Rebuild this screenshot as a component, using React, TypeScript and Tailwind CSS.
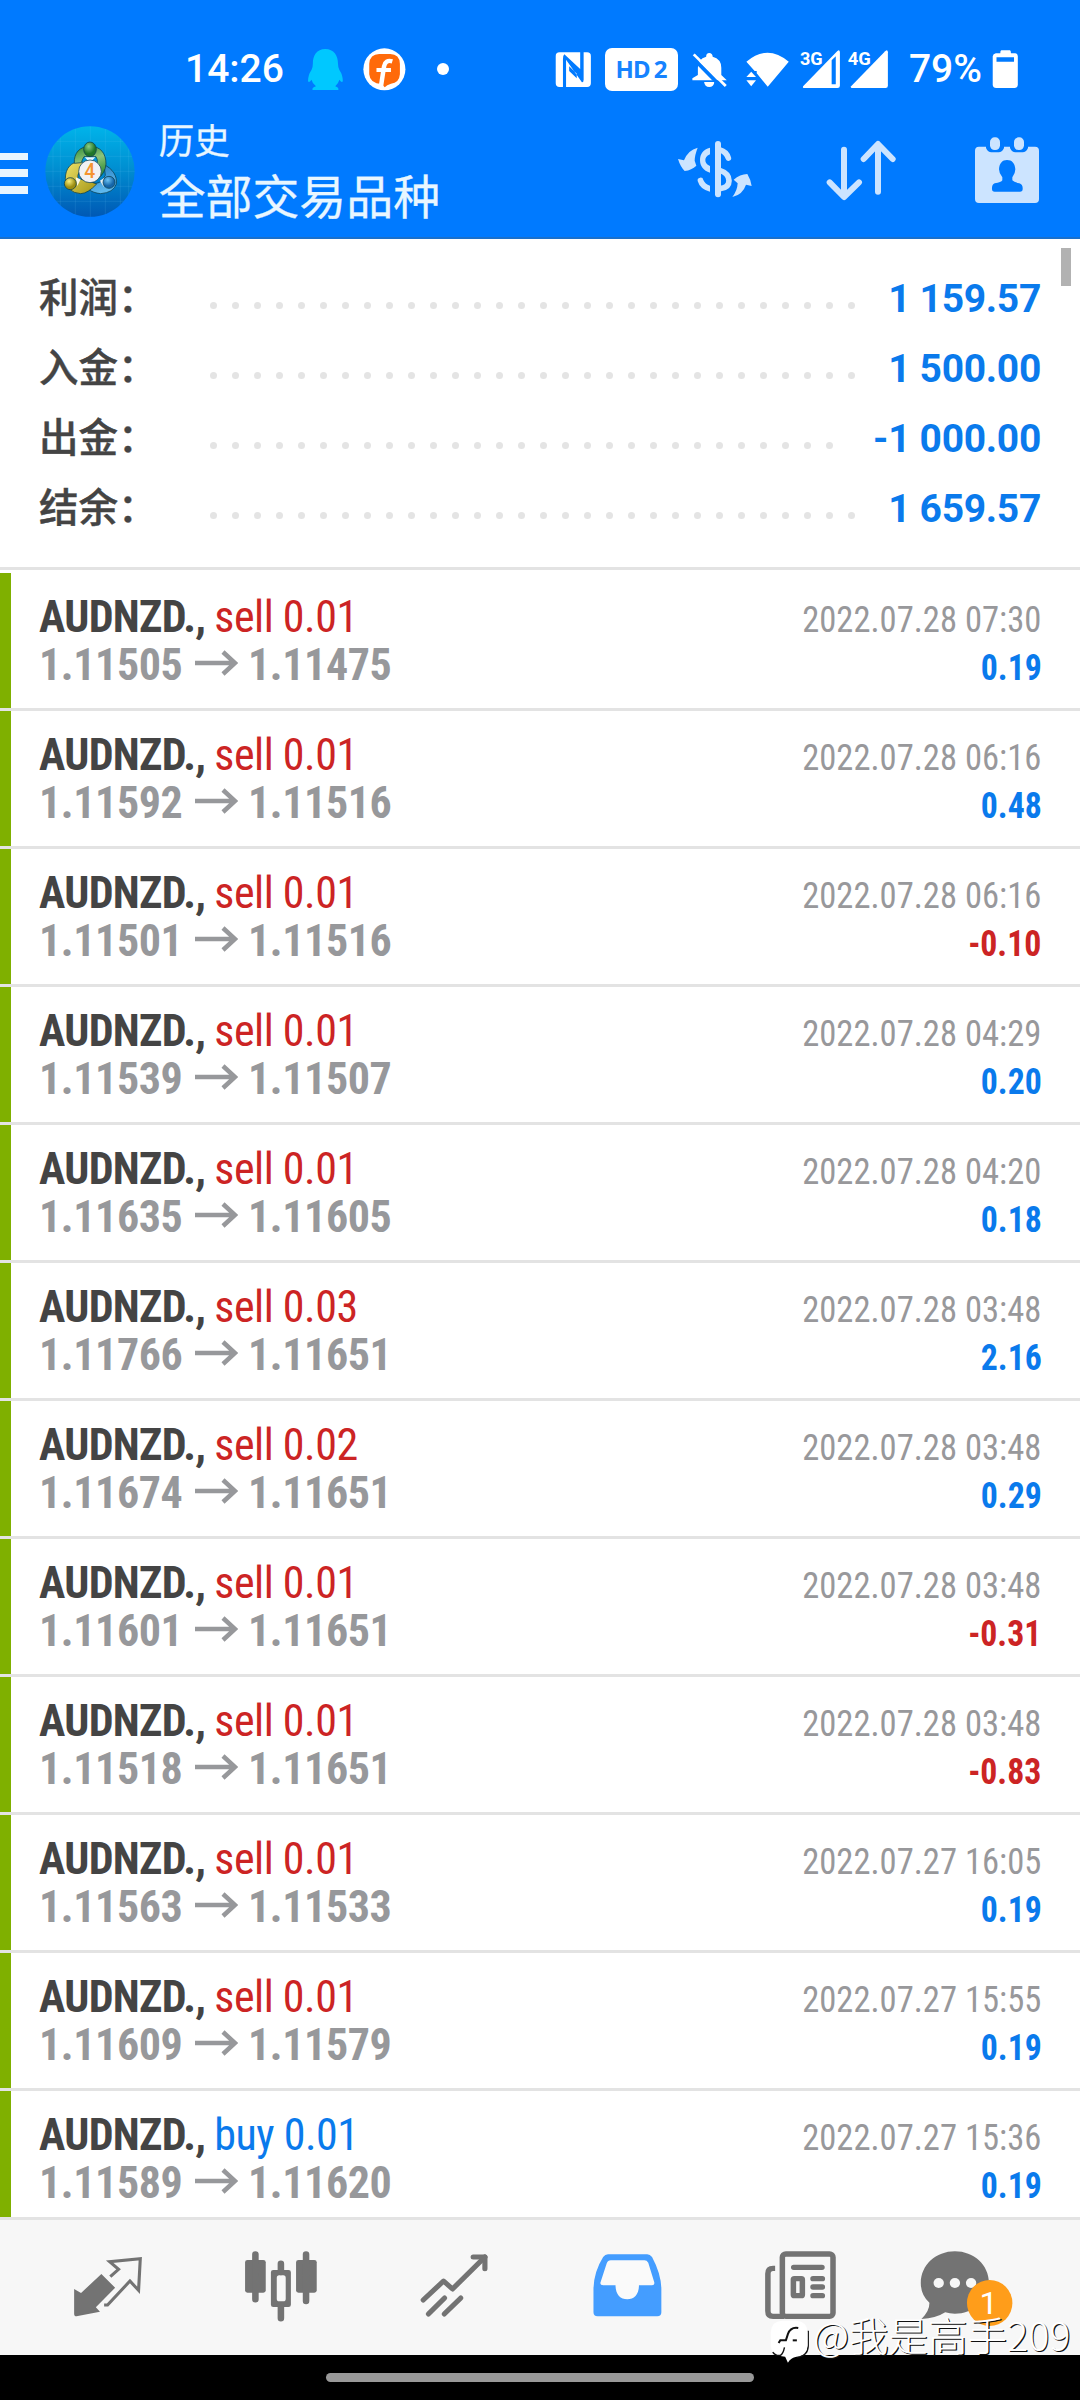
import type { ReactNode } from 'react';

type Deal = { side: 'sell' | 'buy'; lots: string; open: string; close: string; time: string; profit: string };

const deals: Deal[] = [
  { side: 'sell', lots: '0.01', open: '1.11505', close: '1.11475', time: '2022.07.28 07:30', profit: '0.19' },
  { side: 'sell', lots: '0.01', open: '1.11592', close: '1.11516', time: '2022.07.28 06:16', profit: '0.48' },
  { side: 'sell', lots: '0.01', open: '1.11501', close: '1.11516', time: '2022.07.28 06:16', profit: '-0.10' },
  { side: 'sell', lots: '0.01', open: '1.11539', close: '1.11507', time: '2022.07.28 04:29', profit: '0.20' },
  { side: 'sell', lots: '0.01', open: '1.11635', close: '1.11605', time: '2022.07.28 04:20', profit: '0.18' },
  { side: 'sell', lots: '0.03', open: '1.11766', close: '1.11651', time: '2022.07.28 03:48', profit: '2.16' },
  { side: 'sell', lots: '0.02', open: '1.11674', close: '1.11651', time: '2022.07.28 03:48', profit: '0.29' },
  { side: 'sell', lots: '0.01', open: '1.11601', close: '1.11651', time: '2022.07.28 03:48', profit: '-0.31' },
  { side: 'sell', lots: '0.01', open: '1.11518', close: '1.11651', time: '2022.07.28 03:48', profit: '-0.83' },
  { side: 'sell', lots: '0.01', open: '1.11563', close: '1.11533', time: '2022.07.27 16:05', profit: '0.19' },
  { side: 'sell', lots: '0.01', open: '1.11609', close: '1.11579', time: '2022.07.27 15:55', profit: '0.19' },
  { side: 'buy', lots: '0.01', open: '1.11589', close: '1.11620', time: '2022.07.27 15:36', profit: '0.19' },
];

const summary = [
  { label: '利润：', value: '1 159.57', dots: 30 },
  { label: '入金：', value: '1 500.00', dots: 30 },
  { label: '出金：', value: '-1 000.00', dots: 29 },
  { label: '结余：', value: '1 659.57', dots: 30 },
];

function Icon({ box, className, children }: { box: string; className: string; children: ReactNode }) {
  return (
    <svg viewBox={box} preserveAspectRatio="none" className={`block shrink-0 ${className}`} fill="currentColor">
      {children}
    </svg>
  );
}

function StatusBar() {
  return (
    <div className="flex h-[100px] items-start pt-[46.7px] pl-[185px] text-white">
      <span className="w-[99px] shrink-0 font-['Roboto'] text-[39px] leading-[45px] font-medium">14:26</span>
      <Icon box="890 50 110 134" className="ml-[22.5px] h-[44.67px] w-[37.9px] text-[#00c8ff]">
        <path d="M943 56C918 56 907 76 907 100Q907 112 903 119Q893 134 893 152Q895 160 903 148Q906 160 916 168Q904 172 906 179H981Q983 172 972 168Q981 160 984 148Q992 160 994 152Q994 134 984 119Q980 112 980 100C980 76 968 56 943 56Z" />
      </Icon>
      <Icon box="1050 50 130 134" className="ml-[17.2px] h-[44.67px] w-[44.8px]">
        <ellipse cx="1115" cy="117" rx="61" ry="63" />
        <path
          fill="#ff6a0a"
          d="M1100 71H1132Q1159 72 1160 100V132Q1158 158 1134 160Q1122 163 1116 171L1107 161Q1073 160 1071 132V100Q1073 72 1100 71Z"
        />
        <path fill="none" stroke="#fff" strokeWidth="13" d="M1138 93Q1118 87 1114 108L1105 168" />
        <path fill="none" stroke="#fff" strokeWidth="12" d="M1092 119H1134" />
      </Icon>
      <span className="mt-[16.5px] ml-[30.6px] size-3 shrink-0 rounded-full bg-white" />
      <Icon box="40 50 112 134" className="ml-[104.8px] h-[44.67px] w-[38.6px]">
        <path
          fillRule="evenodd"
          d="M56 66H136Q147 66 147 77V159Q147 170 136 170H56Q45 170 45 159V77Q45 66 56 66ZM116 66V116L70 72Q66 76 66 86V170H75V88L121 156Q126 156 126 148V66ZM84 108V122L106 144V130Z"
        />
      </Icon>
      <span className="mt-[1.3px] ml-[12.6px] flex h-[43px] w-[73px] shrink-0 items-center justify-center gap-[4px] rounded-[7px] bg-white font-['Noto_Sans'] text-[24px] leading-none font-bold text-[#1683ff]">
        <span className="tracking-[-0.8px]">HD</span>
        <span>2</span>
      </span>
      <Icon box="440 50 108 134" className="ml-[13.5px] h-[44.67px] w-[37.2px]">
        <path d="M493 68Q502 68 503 79Q528 86 528 112V134L544 150H444V144L460 134V112Q460 86 484 79Q484 68 493 68Z" />
        <path d="M478 155H508Q506 170 493 170Q480 170 478 155Z" />
        <path d="M441 78L534 176" stroke="#007aff" strokeWidth="11" />
        <path d="M448 72L541 167" stroke="#fff" strokeWidth="8" />
      </Icon>
      <Icon box="596 50 130 134" className="ml-[16.5px] h-[44.67px] w-[44.8px]">
        <path d="M600 94Q661 40 723 94L662 169L630 129V122L624 122Z" />
        <path d="M614 124L628 140H600Z" />
        <path d="M600 150H628L614 168Z" />
      </Icon>
      <Icon box="754 50 118 134" className="ml-[9.6px] h-[44.67px] w-[40.6px]">
        <path d="M866 60Q870 60 870 66V166Q870 173 863 173H764Q761 172 763 168L862 63ZM846 90V162H858V78Z" fillRule="evenodd" />
        <text x="754" y="103" fontSize="56" textLength="66" lengthAdjust="spacingAndGlyphs" className="font-['Roboto'] font-bold">
          3G
        </text>
      </Icon>
      <Icon box="896 50 118 134" className="ml-[8.3px] h-[44.67px] w-[40.6px]">
        <path d="M1008 60Q1012 60 1012 66V166Q1012 173 1005 173H906Q903 172 905 168L1004 63Z" />
        <text x="895" y="103" fontSize="56" textLength="67" lengthAdjust="spacingAndGlyphs" className="font-['Roboto'] font-bold">
          4G
        </text>
      </Icon>
      <span className="ml-[19.9px] w-[73px] shrink-0 font-['Roboto'] text-[39px] leading-[45px] font-medium">79%</span>
      <Icon box="1310 50 82 134" className="ml-[9.1px] h-[44.67px] w-[28.2px]">
        <path
          fillRule="evenodd"
          d="M1340 60H1365Q1368 60 1368 69H1380Q1388 70 1388 78V164Q1387 173 1378 173H1325Q1316 173 1315 164V78Q1316 70 1324 69H1337Q1337 60 1340 60ZM1326 81V94H1377V81Z"
        />
      </Icon>
    </div>
  );
}

function Logo() {
  const lines = [159, 181, 226, 271, 316, 361, 386];
  const rows = [94, 139, 184, 229, 274];
  return (
    <svg viewBox="135 48 270 273" className="mt-[26px] ml-[17px] block h-[91px] w-[90px] shrink-0">
      <defs>
        <linearGradient id="disc" x1="0" y1="0" x2="0" y2="1">
          <stop offset="0" stopColor="#00b4ea" />
          <stop offset="0.45" stopColor="#0090d2" />
          <stop offset="1" stopColor="#0058b4" />
        </linearGradient>
        <linearGradient id="green" x1="0" y1="0" x2="0.3" y2="1">
          <stop offset="0" stopColor="#2f8a35" />
          <stop offset="0.5" stopColor="#8cc47a" />
          <stop offset="1" stopColor="#2e8c36" />
        </linearGradient>
        <linearGradient id="gold" x1="0" y1="0" x2="1" y2="1">
          <stop offset="0" stopColor="#efe36a" />
          <stop offset="1" stopColor="#a39414" />
        </linearGradient>
        <linearGradient id="blue" x1="0" y1="0" x2="0.4" y2="1">
          <stop offset="0" stopColor="#1c74b8" />
          <stop offset="1" stopColor="#5db8ee" />
        </linearGradient>
        <radialGradient id="headGreen" cx="0.4" cy="0.3">
          <stop offset="0" stopColor="#8fce84" />
          <stop offset="1" stopColor="#1f7628" />
        </radialGradient>
        <radialGradient id="headGold" cx="0.4" cy="0.3">
          <stop offset="0" stopColor="#fbf07c" />
          <stop offset="1" stopColor="#9c8d12" />
        </radialGradient>
        <radialGradient id="headBlue" cx="0.4" cy="0.3">
          <stop offset="0" stopColor="#6cc4f6" />
          <stop offset="1" stopColor="#1565a8" />
        </radialGradient>
        <clipPath id="round">
          <ellipse cx="270" cy="184.5" rx="134" ry="136" />
        </clipPath>
      </defs>
      <g clipPath="url(#round)">
        <rect x="135" y="48" width="270" height="273" fill="url(#disc)" />
        <g stroke="#7fd6ff" strokeOpacity="0.18" strokeWidth="2">
          {lines.map((x) => (
            <path key={x} d={`M${x} 48V321`} />
          ))}
          {rows.map((y) => (
            <path key={y} d={`M135 ${y}H405`} />
          ))}
        </g>
      </g>
      <g stroke="#0b3f50" strokeWidth="3" strokeOpacity="0.75">
        <path fill="url(#blue)" d="M312 164C338 176 352 198 349 222Q340 248 302 251C272 248 254 234 244 208L268 216Q290 226 306 212L316 196Z" />
        <path fill="url(#gold)" d="M246 154C212 154 196 176 196 206Q200 248 242 251Q264 250 290 222L262 212L234 206Q230 186 250 178Z" />
        <path fill="url(#green)" d="M223 160C221 128 240 109 270 109C302 109 318 130 318 162Q316 190 292 208L284 176Q298 156 288 140H252Q246 150 244 158Z" />
        <path fill="#fff" fillOpacity="0.9" stroke="none" d="M254 142L286 142L274 154H266ZM227 202L242 208L232 228ZM313 203L300 212L311 231Z" />
        <ellipse cx="270" cy="118" rx="19" ry="22" fill="url(#headGreen)" />
        <circle cx="211" cy="221" r="18" fill="url(#headGold)" />
        <circle cx="327" cy="217" r="18" fill="url(#headBlue)" />
        <circle cx="270" cy="184" r="34" fill="#f1f1f4" />
      </g>
      <text x="269" y="204" textAnchor="middle" fontSize="58" fill="#f59430" className="font-['Roboto'] font-medium">
        4
      </text>
    </svg>
  );
}

function Header() {
  return (
    <header className="h-[239px] border-b-2 border-[#1a70cb] bg-[#007aff]">
      <StatusBar />
      <div className="flex items-start text-[#cce4ff]">
        <div className="mt-[52.7px] flex w-7 shrink-0 flex-col gap-[9.3px]">
          <span className="h-[7.5px] bg-[#e8f5ff]" />
          <span className="h-[7.5px] bg-[#e8f5ff]" />
          <span className="h-[7.5px] bg-[#e8f5ff]" />
        </div>
        <Logo />
        <div className="ml-[23.7px] w-[518.3px] shrink-0 pt-[13.5px] font-['Noto_Sans_CJK_SC'] text-[#e8f6ff] [-webkit-text-stroke:0.3px_#e8f6ff]">
          <div className="text-[35.5px] leading-[50px]">历史</div>
          <div className="text-[46.9px] leading-[61px]">全部交易品种</div>
        </div>
        <Icon box="51 48 228 204" className="mt-[36px] h-[68px] w-[76px]">
          <path d="M113 83Q104 106 104 122L109 137Q95 150 74 153Q61 140 54 117L72 121Q84 90 113 83Z" />
          <path d="M217 231Q232 212 233 190L221 179Q240 163 262 162Q272 178 275 198L258 194Q248 224 217 231Z" />
          <path d="M150 83C130 88 120 102 120 120C120 138 130 152 150 158V138C139 133 136 127 136 120C136 114 139 108 150 103Z" />
          <path d="M113 183A8.5 8.5 0 0 1 130 180Q135 192 150 197V215Q120 208 113 183Z" />
          <g fill="none" stroke="currentColor" strokeLinecap="round">
            <path strokeWidth="18" d="M174 72V223" />
            <path strokeWidth="17" d="M180 90Q199 95 205 114" />
            <path strokeWidth="17" d="M179 151Q207 160 207 182Q207 203 180 206" />
          </g>
        </Icon>
        <Icon box="498 48 210 204" className="mt-[36px] ml-[73px] h-[68px] w-[70px]">
          <g fill="none" stroke="currentColor" strokeWidth="18" strokeLinecap="round" strokeLinejoin="round">
            <path d="M552 89V229M509 187L552 231L597 187" />
            <path d="M654 215V73M611 117L654 72L698 117" />
          </g>
        </Icon>
        <Icon box="942 48 198 204" className="mt-[36px] ml-[78px] h-[68px] w-[66px]">
          <rect x="945" y="80" width="192" height="169" rx="12" />
          <g fill="#007aff">
            <path d="M978 70H1032V84Q1026 97 1016 97H994Q984 97 978 84ZM1050 70H1104V84Q1098 97 1088 97H1066Q1056 97 1050 84Z" />
            <path d="M1041 120C1056 120 1065 130 1066 148Q1066 160 1057 172V181Q1062 187 1078 190Q1089 194 1088 207Q1088 215 1080 215H1004Q996 215 996 207Q995 194 1004 190Q1024 187 1027 181V172Q1017 160 1017 148C1018 130 1027 120 1041 120Z" />
          </g>
          <rect x="990" y="52" width="30" height="38" rx="14" />
          <rect x="1062" y="52" width="30" height="38" rx="14" />
        </Icon>
      </div>
    </header>
  );
}

function Summary() {
  return (
    <section className="relative h-[331px] border-b-[3px] border-[#e3e3e3] pt-[21px] pr-[39px] pl-[39px]">
      {summary.map((row) => (
        <div key={row.label} className="flex h-[70px] items-start">
          <span className="w-[171px] shrink-0 font-['Noto_Sans_CJK_SC'] text-[39.5px] leading-[70px] font-medium text-[#444] [-webkit-text-stroke:0.4px_#444]">
            {row.label}
          </span>
          <span className="mt-[42px] flex flex-1 gap-[15px]">
            {Array.from({ length: row.dots }, (_, i) => (
              <i key={i} className="size-[7px] shrink-0 rounded-full bg-[#e4e4e4]" />
            ))}
          </span>
          <span className="font-['Roboto'] text-[39px] leading-[79px] font-bold tracking-[-0.3px] text-[#0a7aec]">
            {row.value}
          </span>
        </div>
      ))}
      <span className="absolute top-[9px] right-[9px] h-[38px] w-[10px] bg-[#b2b2b2]" />
    </section>
  );
}

function DealRow({ deal }: { deal: Deal }) {
  return (
    <li className="flex h-[138px] shrink-0 border-b-[3px] border-[#e3e3e3]">
      <span className="w-[11px] shrink-0 bg-[#7fb000]" />
      <div className="ml-[28px] flex-1 pt-[20px] font-['Roboto_Condensed'] text-[44px] leading-[48px]">
        <div className="flex">
          <span className="font-bold tracking-[-0.7px] text-[#444]">AUDNZD.,</span>
          <span
            className={
              deal.side === 'sell'
                ? 'ml-[9px] tracking-[-0.5px] text-[#cc2424]'
                : 'ml-[9px] tracking-[-0.5px] text-[#0a7aec]'
            }
          >
            {deal.side} {deal.lots}
          </span>
        </div>
        <div className="flex items-start font-bold tracking-[-0.4px] text-[#97989b]">
          <span className="w-[156px]">{deal.open}</span>
          <svg viewBox="0 0 43 26" className="mt-[8.5px] h-[26px] w-[43px]" fill="none" stroke="currentColor" strokeWidth="4.5">
            <path d="M0 13H40M28 2L40 13L28 24" />
          </svg>
          <span className="ml-[10px]">{deal.close}</span>
        </div>
      </div>
      <div className="flex flex-col items-end pt-[22px] pr-[38.5px] font-['Roboto_Condensed'] text-[37.5px] leading-[48px]">
        <span className="origin-right scale-x-[0.922] text-[#98989b]">{deal.time}</span>
        <span
          className={
            deal.profit.startsWith('-')
              ? 'origin-right scale-x-[0.9] font-bold text-[#cc2424]'
              : 'origin-right scale-x-[0.9] font-bold text-[#0a7aec]'
          }
        >
          {deal.profit}
        </span>
      </div>
    </li>
  );
}

function NavBar() {
  return (
    <nav className="grid h-[138px] grid-cols-6 justify-items-center border-t-[3px] border-[#e3e3e3] bg-[#f7f7f7] px-[21.5px] pt-[26.7px] text-[#737373]">
      <Icon box="205 560 220 230" className="h-[76.7px] w-[75.8px]">
        <path d="M217 686L237 698L296 641L336 682L280 741L292 754L224 768Q217 768 217 760Z" />
        <path
          fill="none"
          stroke="currentColor"
          strokeWidth="9"
          d="M322 649L346 627L320 604L409 595L404 690L379 662L314 734H304"
        />
      </Icon>
      <Icon box="706 560 220 230" className="h-[76.7px] w-[75.8px]">
        <rect x="712" y="599" width="60" height="98" rx="7" />
        <rect x="860" y="599" width="60" height="98" rx="7" />
        <path
          fillRule="evenodd"
          d="M794 629H838Q845 629 845 636V733Q845 740 838 740H794Q787 740 787 733V636Q787 629 794 629ZM811 645Q804 645 804 653V715Q804 723 811 723H823Q830 723 830 715V653Q830 645 823 645Z"
        />
        <path d="M742 582V717M889 582V722M816 610V635M816 735V774" stroke="currentColor" strokeWidth="19" strokeLinecap="round" />
      </Icon>
      <Icon box="1208 560 220 230" className="h-[76.7px] w-[75.8px]">
        <g fill="none" stroke="currentColor" strokeWidth="15" strokeLinecap="round" strokeLinejoin="round">
          <path d="M1229 719L1288 662L1314 686L1408 590" />
          <path d="M1374 590H1408V625" />
          <path d="M1244 761L1291 713M1290 761L1338 713" />
        </g>
      </Icon>
      <Icon box="143 560 220 230" className="h-[76.7px] w-[75.8px] text-[#449dff]">
        <path fill="#fafafa" d="M190 595H318L338 680H170ZM210 660H298V720H210Z" />
        <path
          fillRule="evenodd"
          d="M198 582H312Q320 582 326 590Q352 640 353 685V756Q353 768 341 768H168Q156 768 156 756V685Q157 635 184 590Q190 582 198 582ZM206 600Q198 600 194 610L177 664Q173 674 184 675H220C220 702 234 717 254 717C274 717 288 702 288 675H326Q335 674 332 664L315 607Q311 600 304 600Z"
        />
      </Icon>
      <Icon box="643 560 220 230" className="h-[76.7px] w-[75.8px]">
        <g fill="none" stroke="currentColor" strokeWidth="16">
          <rect x="705" y="581" width="147" height="187" rx="10" />
          <path d="M684 624H678Q663 624 663 640V752Q663 768 678 768H710" />
          <path strokeLinecap="round" d="M738 621H820M794 655H821M794 680H821M794 706H821" />
          <rect x="737" y="655" width="26" height="51" rx="3" />
        </g>
      </Icon>
      <Icon box="1095 560 290 230" className="mr-[11px] h-[76.7px] w-[99.9px] overflow-visible">
        <path d="M1205 573C1260 573 1304 614 1304 668C1304 720 1260 760 1205 760Q1190 760 1177 756Q1150 774 1108 776Q1132 752 1131 727Q1106 704 1106 668C1106 614 1150 573 1205 573Z" />
        <g fill="#f7f7f7">
          <circle cx="1158" cy="668" r="15" />
          <circle cx="1205" cy="668" r="15" />
          <circle cx="1252" cy="668" r="15" />
        </g>
        <ellipse cx="1306" cy="728" rx="66" ry="69" fill="#ff9d1a" />
        <text x="1303" y="762" textAnchor="middle" fontSize="94" fill="#fff" className="font-['Roboto']">
          1
        </text>
      </Icon>
    </nav>
  );
}

function Watermark() {
  return (
    <div className="absolute top-[2310px] left-[770px] flex items-start">
      <Icon box="668 750 112 170" className="h-[56.7px] w-[38.6px] text-white">
        <path d="M779 812V858Q778 888 746 892" fill="none" stroke="#111" strokeWidth="4" />
        <path d="M702 782H744Q776 784 777 816V856Q775 888 742 891Q728 894 720 908L712 890Q672 888 670 856V816Q672 784 702 782Z" />
        <g fill="none" stroke="#111" strokeWidth="6">
          <path d="M750 804Q728 800 720 822Q717 832 714 841H698L693 849" />
          <path d="M734 841H746" />
          <path strokeWidth="4" d="M676 876Q684 888 698 886Q706 882 710 862" />
        </g>
      </Icon>
      <span className="-mt-[5px] ml-[4.5px] font-['Noto_Sans_CJK_SC'] text-[39.5px] leading-[58px] font-light whitespace-nowrap text-white [text-shadow:1.2px_1.2px_0.5px_#111]">
        @我是高手209
      </span>
    </div>
  );
}

export default function App() {
  return (
    <div className="relative flex h-[2400px] w-[1080px] flex-col overflow-hidden bg-white">
      <Header />
      <Summary />
      <ul className="mt-[3px] flex h-[1644px] flex-col overflow-hidden">
        {deals.map((deal) => (
          <DealRow key={deal.time + deal.open} deal={deal} />
        ))}
      </ul>
      <NavBar />
      <div className="flex h-[45px] justify-center bg-black pt-[18px]">
        <span className="h-[9px] w-[428px] rounded-full bg-[#999]" />
      </div>
      <Watermark />
    </div>
  );
}
